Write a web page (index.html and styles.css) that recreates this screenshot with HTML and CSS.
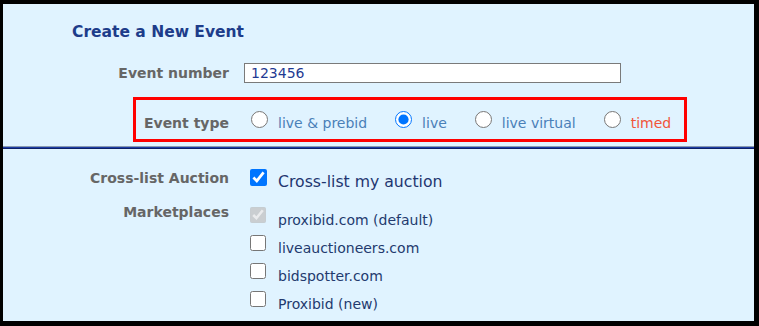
FILE: index.html
```html
<!DOCTYPE html>
<html lang="en">
<head>
<meta charset="utf-8">
<title>Create a New Event</title>
<link rel="stylesheet" href="styles.css">
</head>
<body>
<div class="frame">
  <section class="top">
    <h1 class="title">Create a New Event</h1>
    <div class="row row-number">
      <label class="lbl lbl-wide" for="evnum">Event number</label>
      <input id="evnum" class="text-input" type="text" value="123456">
    </div>
    <div class="type-box">
      <span class="lbl lbl-type">Event type</span>
      <div class="radios">
        <label class="opt"><input type="radio" name="etype" class="radio"><span class="opt-text">live &amp; prebid</span></label>
        <label class="opt"><input type="radio" name="etype" class="radio" checked><span class="opt-text">live</span></label>
        <label class="opt"><input type="radio" name="etype" class="radio"><span class="opt-text">live virtual</span></label>
        <label class="opt"><input type="radio" name="etype" class="radio"><span class="opt-text opt-timed">timed</span></label>
      </div>
    </div>
  </section>
  <div class="divider"></div>
  <section class="bottom">
    <div class="row row-cross">
      <span class="lbl lbl-wide lbl-cross">Cross-list Auction</span>
      <label class="cross-opt"><input type="checkbox" class="check check-big" checked><span class="cross-text">Cross-list my auction</span></label>
    </div>
    <div class="row row-market">
      <span class="lbl lbl-wide lbl-market">Marketplaces</span>
      <div class="markets">
        <label class="mopt"><input type="checkbox" class="check" checked disabled><span class="mtext">proxibid.com (default)</span></label>
        <label class="mopt"><input type="checkbox" class="check"><span class="mtext">liveauctioneers.com</span></label>
        <label class="mopt"><input type="checkbox" class="check"><span class="mtext">bidspotter.com</span></label>
        <label class="mopt"><input type="checkbox" class="check"><span class="mtext">Proxibid (new)</span></label>
      </div>
    </div>
  </section>
</div>
</body>
</html>
```
FILE: styles.css
```css
* { box-sizing: border-box; }
html, body { margin: 0; padding: 0; background: #000; }
body { font-family: "DejaVu Sans", Verdana, sans-serif; }

.frame {
  width: 759px;
  height: 326px;
  border-style: solid;
  border-color: #000;
  border-width: 4px 5px 5px 3px;
  background: #e0f3ff;
  overflow: hidden;
}

.top { padding-top: 18px; }

.title {
  margin: 0;
  padding-left: 69px;
  font-size: 15.5px;
  line-height: 20px;
  font-weight: bold;
  color: #1d3c8a;
}

.row { display: flex; }

.lbl {
  font-size: 14px;
  font-weight: bold;
  color: #666666;
  text-align: right;
  line-height: 16px;
  flex: none;
}
.lbl-wide { width: 226px; }

.row-number {
  margin-top: 21px;
  align-items: center;
  height: 20px;
}
.text-input {
  margin: 0 0 0 15px;
  width: 377px;
  height: 20px;
  border: 1px solid #7a7a7a;
  background: #fff;
  padding: 0 0 0 6px;
  font-family: "DejaVu Sans", Verdana, sans-serif;
  font-size: 14px;
  color: #1f3a93;
  outline: none;
}

.type-box {
  margin: 14px 0 0 130px;
  width: 554px;
  height: 45px;
  border: 3px solid #ff0000;
  display: flex;
  align-items: center;
}
.lbl-type { width: 93px; padding-top: 7px; }
.radios {
  display: flex;
  align-items: center;
  gap: 28px;
  margin-left: 22px;
}
.opt { display: flex; align-items: center; }
.radio {
  width: 17px;
  height: 17px;
  margin: 0 10px 0 0;
}
.opt-text {
  font-size: 14px;
  color: #4a80b8;
  line-height: 16px;
  padding-top: 7px;
}
.opt-timed { color: #f1553a; }

.divider {
  margin-top: 4px;
  height: 3px;
  border-top: 1px solid #8b9bb0;
  background: linear-gradient(#1d3ca4 0 50%, #0c1f66 50% 100%);
}

.bottom { padding-top: 20px; }

.row-cross { height: 38px; align-items: flex-start; }
.lbl-cross { padding-top: 1px; }
.cross-opt {
  display: flex;
  align-items: flex-start;
  margin-left: 21px;
}
.check {
  width: 16px;
  height: 16px;
  margin: 0 12px 0 0;
  flex: none;
}
.check-big { width: 17px; height: 17px; margin-right: 11px; }
.cross-text {
  font-size: 15.7px;
  line-height: 18px;
  margin-top: 4px;
  color: #1f3670;
}

.row-market { align-items: flex-start; }
.lbl-market { margin-top: -3px; }
.markets {
  margin-left: 21px;
  display: flex;
  flex-direction: column;
}
.mopt {
  display: flex;
  align-items: flex-start;
  height: 28px;
}
.mtext {
  font-size: 14px;
  line-height: 16px;
  margin-top: 5px;
  color: #233a6e;
}
```
